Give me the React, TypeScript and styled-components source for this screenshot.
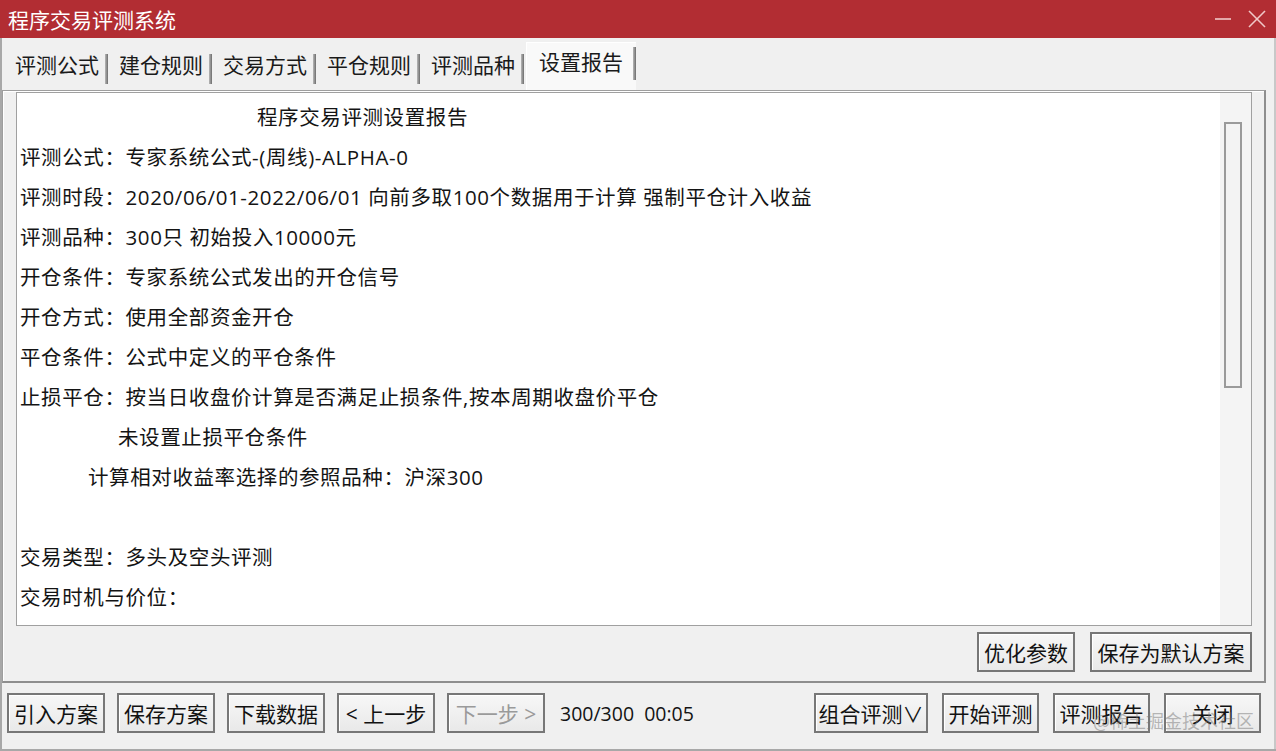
import React from "react";
import styled, { createGlobalStyle } from "styled-components";

const Global = createGlobalStyle`
  html, body { margin: 0; padding: 0; background: #f0f0f0; }
  body { font-family: "Open Sans", "Noto Sans CJK SC", sans-serif; }
  * { box-sizing: border-box; }
`;

const Window = styled.div`
  position: relative;
  width: 1276px;
  height: 751px;
  display: flex;
  flex-direction: column;
  background: #f0f0f0;
  border-bottom: 2px solid #a8a8a8;
  overflow: hidden;
`;

const TitleBar = styled.div`
  height: 38px;
  flex: none;
  background: #b22d33;
  color: #fff;
  display: flex;
  align-items: center;
  padding-left: 8px;
  font-family: "Noto Sans CJK SC", sans-serif;
  font-size: 21px;
`;

const TitleText = styled.div`
  flex: 1;
`;

const WinControls = styled.div`
  display: flex;
  align-items: center;
  gap: 16px;
  padding-right: 10px;
`;

const Body = styled.div`
  flex: 1;
  display: flex;
  flex-direction: column;
  border-left: 2px solid #a8a8a8;
  border-right: 2px solid #c8c8c8;
`;

const TabStrip = styled.div`
  height: 52px;
  display: flex;
  align-items: flex-end;
  padding-left: 4px;
`;

const Tab = styled.div<{ $active?: boolean }>`
  height: ${(p) => (p.$active ? "48px" : "44px")};
  display: flex;
  align-items: center;
  padding: ${(p) => (p.$active ? "0 13px 12px 12px" : "0 9px 8px 9px")};
  font-family: "Noto Sans CJK SC", sans-serif;
  font-size: 21px;
  color: #1a1a1a;
  background: ${(p) => (p.$active ? "#f9f9f9" : "transparent")};
  border-top: ${(p) => (p.$active ? "1px solid #ffffff" : "none")};
  border-left: ${(p) => (p.$active ? "1px solid #ffffff" : "none")};
  position: relative;
  margin-right: 2px;
  &::after {
    content: "";
    position: absolute;
    right: 0;
    top: ${(p) => (p.$active ? "4px" : "8px")};
    bottom: ${(p) => (p.$active ? "10px" : "6px")};
    width: 3px;
    background: linear-gradient(to right, #b8b8b8, #6d6d6d);
  }
`;

const Panel = styled.div`
  height: 593px;
  margin-right: 8px;
  border: 1px solid #9e9e9e;
  border-right: 2px solid #8e8e8e;
  border-bottom: 2px solid #8e8e8e;
  box-shadow: inset 1px 1px 0 #ffffff;
  padding: 1px 12px 8px 13px;
  display: flex;
  flex-direction: column;
`;

const Report = styled.div`
  height: 534px;
  background: #ffffff;
  border: 1px solid #a0a0a0;
  display: flex;
`;

const Lines = styled.div`
  flex: 1;
  padding: 3px 0 0 3px;
  display: flex;
  flex-direction: column;
`;

const Line = styled.div<{ $indent?: number }>`
  height: 40px;
  display: flex;
  align-items: center;
  padding-left: ${(p) => p.$indent ?? 0}px;
  font-size: 20.5px;
  letter-spacing: 0.6px;
  color: #141414;
  white-space: pre;
`;

const ScrollTrack = styled.div`
  width: 31px;
  background: #f4f4f4;
  padding: 29px 0 0 4px;
`;

const Thumb = styled.div`
  width: 18px;
  height: 266px;
  border: 2px solid #9a9a9a;
  background: #f3f3f3;
`;

const PanelButtons = styled.div`
  display: flex;
  justify-content: flex-end;
  gap: 15px;
  margin-top: 6px;
`;

const Btn = styled.div<{ $w: number; $disabled?: boolean }>`
  width: ${(p) => p.$w}px;
  height: 40px;
  display: flex;
  align-items: center;
  justify-content: center;
  border: 2px solid #777777;
  background: linear-gradient(#f7f7f7, #e9e9e9);
  box-shadow: inset 1px 1px 0 #ffffff;
  font-size: 21px;
  color: ${(p) => (p.$disabled ? "#9a9a9a" : "#121212")};
  white-space: nowrap;
`;

const BottomBar = styled.div`
  flex: 1;
  display: flex;
  align-items: flex-start;
  padding: 10px 0 0 5px;
`;

const LeftGroup = styled.div`
  display: flex;
  gap: 12px;
  align-items: center;
`;

const Status = styled.div`
  font-size: 19.5px;
  color: #141414;
  height: 40px;
  display: flex;
  align-items: center;
  margin-left: 15px;
  white-space: pre;
`;

const RightGroup = styled.div`
  margin-left: auto;
  margin-right: 13px;
  display: flex;
  gap: 14px;
`;

const Watermark = styled.div`
  position: absolute;
  left: 1093px;
  top: 707px;
  font-family: "Noto Sans CJK SC", sans-serif;
  font-size: 18px;
  color: rgba(120, 120, 120, 0.5);
  pointer-events: none;
  white-space: nowrap;
`;

const tabs = ["评测公式", "建仓规则", "交易方式", "平仓规则", "评测品种", "设置报告"];

const lines: { t: string; indent?: number }[] = [
  { t: "程序交易评测设置报告", indent: 237 },
  { t: "评测公式：专家系统公式-(周线)-ALPHA-0" },
  { t: "评测时段：2020/06/01-2022/06/01 向前多取100个数据用于计算 强制平仓计入收益" },
  { t: "评测品种：300只 初始投入10000元" },
  { t: "开仓条件：专家系统公式发出的开仓信号" },
  { t: "开仓方式：使用全部资金开仓" },
  { t: "平仓条件：公式中定义的平仓条件" },
  { t: "止损平仓：按当日收盘价计算是否满足止损条件,按本周期收盘价平仓" },
  { t: "未设置止损平仓条件", indent: 98 },
  { t: "计算相对收益率选择的参照品种：沪深300", indent: 68 },
  { t: "" },
  { t: "交易类型：多头及空头评测" },
  { t: "交易时机与价位：" },
];

export default function App() {
  return (
    <>
      <Global />
      <Window>
        <TitleBar>
          <TitleText>程序交易评测系统</TitleText>
          <WinControls>
            <svg width="18" height="18" viewBox="0 0 18 18">
              <line x1="1" y1="9" x2="17" y2="9" stroke="#f0c8c8" strokeWidth="1.6" />
            </svg>
            <svg width="18" height="18" viewBox="0 0 18 18">
              <line x1="1" y1="1" x2="17" y2="17" stroke="#f0c8c8" strokeWidth="1.6" />
              <line x1="17" y1="1" x2="1" y2="17" stroke="#f0c8c8" strokeWidth="1.6" />
            </svg>
          </WinControls>
        </TitleBar>
        <Body>
          <TabStrip>
            {tabs.map((t, i) => (
              <Tab key={t} $active={i === tabs.length - 1}>
                {t}
              </Tab>
            ))}
          </TabStrip>
          <Panel>
            <Report>
              <Lines>
                {lines.map((l, i) => (
                  <Line key={i} $indent={l.indent}>
                    {l.t}
                  </Line>
                ))}
              </Lines>
              <ScrollTrack>
                <Thumb />
              </ScrollTrack>
            </Report>
            <PanelButtons>
              <Btn $w={98}>优化参数</Btn>
              <Btn $w={162}>保存为默认方案</Btn>
            </PanelButtons>
          </Panel>
          <BottomBar>
            <LeftGroup>
              <Btn $w={98}>引入方案</Btn>
              <Btn $w={98}>保存方案</Btn>
              <Btn $w={98}>下载数据</Btn>
              <Btn $w={98}>&lt; 上一步</Btn>
              <Btn $w={98} $disabled>
                下一步 &gt;
              </Btn>
            </LeftGroup>
            <Status>300/300  00:05</Status>
            <RightGroup>
              <Btn $w={114}>组合评测∨</Btn>
              <Btn $w={97}>开始评测</Btn>
              <Btn $w={97}>评测报告</Btn>
              <Btn $w={97}>关闭</Btn>
            </RightGroup>
          </BottomBar>
        </Body>
        <Watermark>@稀土掘金技术社区</Watermark>
      </Window>
    </>
  );
}
